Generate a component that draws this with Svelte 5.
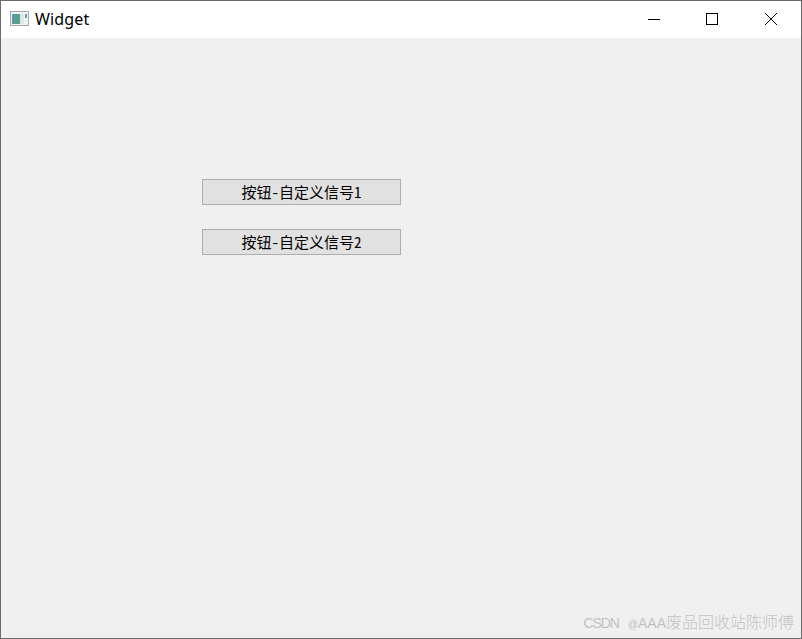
<script>
  const buttons = ['按钮-自定义信号1', '按钮-自定义信号2'];
</script>

<div class="window">
  <header class="titlebar">
    <svg class="app-icon" width="20" height="16" viewBox="0 0 20 16" aria-hidden="true">
      <defs>
        <linearGradient id="pane" x1="0" y1="0" x2="1" y2="1">
          <stop offset="0" stop-color="#4f9fb0" />
          <stop offset="1" stop-color="#5f9a78" />
        </linearGradient>
      </defs>
      <rect x="0.5" y="0.5" width="18" height="14" fill="#f2f4f6" stroke="#a4a8ac" />
      <rect x="2" y="3" width="8" height="10" fill="url(#pane)" />
      <rect x="10" y="3" width="4" height="10" fill="#dfe6e8" />
      <rect x="15" y="3" width="2" height="4" fill="#6fa0a8" />
    </svg>
    <span class="title">Widget</span>
    <div class="controls">
      <button class="ctl" aria-label="Minimize">
        <svg width="14" height="14" viewBox="0 0 14 14"><path d="M1 7.5h12" stroke="#000" fill="none" /></svg>
      </button>
      <button class="ctl" aria-label="Maximize">
        <svg width="14" height="14" viewBox="0 0 14 14"><rect x="1.5" y="1.5" width="11" height="11" stroke="#000" fill="none" /></svg>
      </button>
      <button class="ctl close" aria-label="Close">
        <svg width="14" height="14" viewBox="0 0 14 14"><path d="M1 1l12 12M13 1L1 13" stroke="#000" fill="none" /></svg>
      </button>
    </div>
  </header>

  <main class="content">
    {#each buttons as label}
      <button class="push">{label}</button>
    {/each}
  </main>

  <div class="watermark"><span class="latin csdn">CSDN</span><span class="at">@</span><span class="latin">AAA</span>废品回收站陈师傅</div>
</div>

<style>
  :global(body) {
    margin: 0;
  }

  .window {
    position: relative;
    box-sizing: border-box;
    width: 802px;
    height: 639px;
    display: flex;
    flex-direction: column;
    border: 1px solid #6b6b6b;
    background: #f0f0f0;
    overflow: hidden;
  }

  .titlebar {
    height: 37px;
    display: flex;
    align-items: center;
    background: #fff;
    padding-left: 9px;
    flex-shrink: 0;
  }

  .app-icon {
    margin-right: 5px;
    margin-top: -2px;
  }

  .title {
    font-family: "Noto Sans", "Open Sans", sans-serif;
    font-size: 16px;
    letter-spacing: 0.15px;
    color: #000;
    line-height: 1;
    margin-top: -1px;
  }

  .controls {
    margin-left: auto;
    display: flex;
    align-self: stretch;
    margin-right: 1px;
  }

  .ctl {
    width: 58px;
    padding: 0;
    border: none;
    background: none;
    display: flex;
    align-items: center;
    justify-content: center;
  }

  .ctl.close {
    margin-left: 1px;
  }

  .ctl svg {
    display: block;
    margin-top: -2px;
  }

  .content {
    flex: 1;
    display: flex;
    flex-direction: column;
    align-items: flex-start;
    gap: 24px;
    padding: 141px 0 0 201px;
  }

  .push {
    box-sizing: border-box;
    width: 199px;
    height: 26px;
    padding: 0;
    border: 1px solid #adadad;
    background: #e1e1e1;
    color: #000;
    font-family: "Noto Sans Mono CJK SC", "Noto Sans CJK SC", sans-serif;
    font-size: 15px;
    font-weight: 300;
    line-height: 24px;
  }

  .watermark {
    position: absolute;
    right: 7px;
    bottom: 1px;
    font-family: "Noto Sans CJK SC", sans-serif;
    font-size: 16px;
    font-weight: 300;
    line-height: 24px;
    color: #c2c2c2;
    white-space: nowrap;
    display: flex;
    align-items: baseline;
  }

  .latin {
    font-family: "Liberation Sans", sans-serif;
    font-size: 14px;
  }

  .csdn {
    letter-spacing: -1.1px;
  }

  .at {
    font-family: "Liberation Sans", sans-serif;
    font-size: 10px;
    margin-left: 9px;
  }
</style>
